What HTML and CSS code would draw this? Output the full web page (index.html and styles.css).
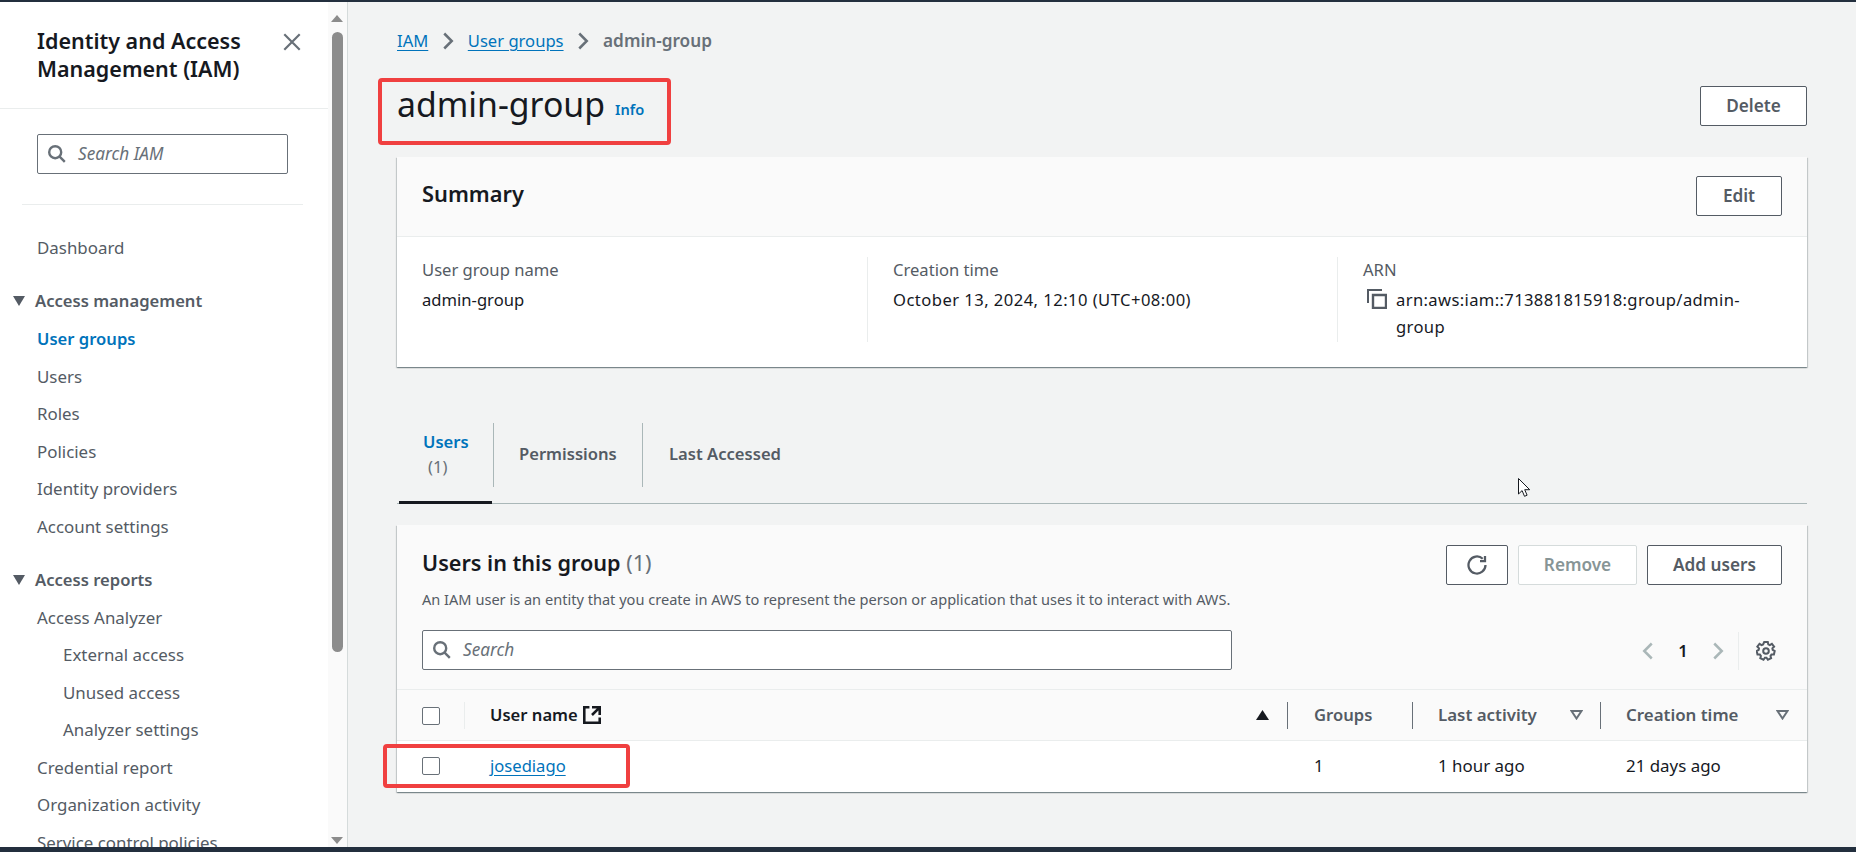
FILE: index.html
```html
<!DOCTYPE html>
<html lang="en">
<head>
<meta charset="utf-8">
<title>admin-group | IAM</title>
<link rel="stylesheet" href="styles.css">
</head>
<body>
<div class="topbar"></div>
<div class="shell">
  <aside class="sidebar">
    <div class="side-head">
      <h2 class="side-title">Identity and Access Management (IAM)</h2>
      <svg class="side-close" viewBox="1 1 14 14"><path d="M2 2l12 12M14 2L2 14"/></svg>
    </div>
    <div class="side-search-wrap">
      <div class="side-search">
        <svg class="search-icon" viewBox="1 1 15 15"><circle cx="7" cy="7" r="5"/><path d="M15 15l-4.500-4.500"/></svg>
        <span class="placeholder">Search IAM</span>
      </div>
    </div>
    <nav class="nav">
      <a class="nav-item">Dashboard</a>
      <div class="nav-section nav-section-first"><span class="caret"></span>Access management</div>
      <a class="nav-item nav-active">User groups</a>
      <a class="nav-item">Users</a>
      <a class="nav-item">Roles</a>
      <a class="nav-item">Policies</a>
      <a class="nav-item">Identity providers</a>
      <a class="nav-item">Account settings</a>
      <div class="nav-section"><span class="caret"></span>Access reports</div>
      <a class="nav-item">Access Analyzer</a>
      <a class="nav-item nav-sub">External access</a>
      <a class="nav-item nav-sub">Unused access</a>
      <a class="nav-item nav-sub">Analyzer settings</a>
      <a class="nav-item">Credential report</a>
      <a class="nav-item">Organization activity</a>
      <a class="nav-item">Service control policies</a>
    </nav>
  </aside>
  <div class="scrollbar">
    <span class="arrow-up"></span>
    <span class="thumb"></span>
    <span class="track-space"></span>
    <span class="arrow-down"></span>
  </div>
  <main class="main">
    <div class="crumbs">
      <a class="link">IAM</a>
      <svg class="crumb-sep" viewBox="0 0 16 16"><path d="M5 2l6 6-6 6"/></svg>
      <a class="link">User groups</a>
      <svg class="crumb-sep" viewBox="0 0 16 16"><path d="M5 2l6 6-6 6"/></svg>
      <span class="crumb-current">admin-group</span>
    </div>
    <div class="page-head">
      <div class="page-title"><h1>admin-group</h1><span class="info">Info</span></div>
      <button class="btn btn-delete">Delete</button>
    </div>

    <section class="card">
      <div class="card-head summary-head">
        <h2 class="summary-title">Summary</h2>
        <button class="btn btn-edit">Edit</button>
      </div>
      <div class="summary-body">
        <div class="col col-1">
          <div class="label">User group name</div>
          <div class="value">admin-group</div>
        </div>
        <div class="col col-2">
          <div class="label">Creation time</div>
          <div class="value value-date">October 13, 2024, 12:10 (UTC+08:00)</div>
        </div>
        <div class="col col-3">
          <div class="label">ARN</div>
          <div class="arn">
            <svg class="copy-icon" viewBox="0 0 20 20"><path class="copy-back" d="M1 14V1h14"/><path d="M6 6h13v13H6z"/></svg>
            <div class="value arn-text">arn:aws:iam::713881815918:group/admin-group</div>
          </div>
        </div>
      </div>
    </section>

    <div class="tabs">
      <div class="tab tab-active"><div class="tab-label"><span class="tab-name">Users</span><span class="tab-count">(1)</span></div></div>
      <div class="tab tab-perm"><div class="tab-label">Permissions</div></div>
      <div class="tab tab-last"><div class="tab-label">Last Accessed</div></div>
    </div>

    <section class="card users-card">
      <div class="card-head users-head">
        <div class="users-top">
          <div>
            <h2 class="users-title">Users in this group <span class="users-count">(1)</span></h2>
            <p class="users-desc">An IAM user is an entity that you create in AWS to represent the person or application that uses it to interact with AWS.</p>
          </div>
          <div class="actions">
            <button class="btn btn-refresh" aria-label="Refresh">
              <svg viewBox="0 0 16 16"><path d="M14.800 8A6.800 6.800 0 1 1 12.600 3"/><path d="M14.400 0.800v4h-4"/></svg>
            </button>
            <button class="btn btn-remove">Remove</button>
            <button class="btn btn-add">Add users</button>
          </div>
        </div>
        <div class="users-tools">
          <div class="table-search">
            <svg class="search-icon" viewBox="1 1 15 15"><circle cx="7" cy="7" r="5"/><path d="M15 15l-4.500-4.500"/></svg>
            <span class="placeholder">Search</span>
          </div>
          <div class="pager">
            <svg class="pager-chev" viewBox="0 0 16 16"><path d="M11 2L5 8l6 6"/></svg>
            <span class="pager-num">1</span>
            <svg class="pager-chev" viewBox="0 0 16 16"><path d="M5 2l6 6-6 6"/></svg>
            <span class="pager-sep"></span>
            <svg class="gear" viewBox="0 0 20 20"><path d="M8.200 1h3.600l.5 2.400 1.500.7 2.100-1.300 2.200 2.800-1.700 1.700.3 1.600 2 1.200-.8 3.400-2.400.1-1 1.300.6 2.300-3.200 1.500-1.400-2h-1.600l-1.400 2-3.200-1.500.6-2.300-1-1.300-2.400-.1-.8-3.400 2-1.200.3-1.600-1.700-1.700 2.200-2.800 2.100 1.300 1.500-.7z"/><circle cx="10" cy="10" r="2.800"/></svg>
          </div>
        </div>
      </div>
      <div class="thead">
        <div class="th c-select"><span class="check"></span></div>
        <div class="th c-name"><span class="th-strong">User name</span>
          <svg class="ext-icon" viewBox="1 1 14 14"><path d="M14 8V2H8M14 2L8 8M6 2H2v12h12v-4"/></svg>
          <span class="grow"></span><svg class="sort-up" viewBox="0 0 13 10"><path d="M6.500 0L13 10H0z"/></svg></div>
        <div class="th c-groups">Groups</div>
        <div class="th c-activity">Last activity<span class="grow"></span><svg class="sort-down" viewBox="0 0 13 10"><path d="M1.500 1h10L6.500 8.500z"/></svg></div>
        <div class="th c-created">Creation time<span class="grow"></span><svg class="sort-down" viewBox="0 0 13 10"><path d="M1.500 1h10L6.500 8.500z"/></svg></div>
      </div>
      <div class="trow">
        <div class="td c-select"><span class="check"></span></div>
        <div class="td c-name"><a class="link">josediago</a></div>
        <div class="td c-groups">1</div>
        <div class="td c-activity">1 hour ago</div>
        <div class="td c-created">21 days ago</div>
      </div>
    </section>
  </main>
</div>
<div class="bottombar"></div>

<div class="mark mark-title"></div>
<div class="mark mark-user"></div>
<svg class="cursor" viewBox="0 0 12 19"><path d="M.5.5v15.500l3.600-3.400 2.400 5.700 2.600-1.100-2.400-5.500h5z"/></svg>
</body>
</html>
```
FILE: styles.css
```css
* { box-sizing: border-box; }
html, body { margin: 0; height: 100%; }
body {
  display: flex;
  flex-direction: column;
  height: 852px;
  overflow: hidden;
  background: #f2f3f3;
  color: #16191f;
  font-family: "Noto Sans", "Open Sans", sans-serif;
  font-size: 16.600px;
  line-height: 22px;
}
h1, h2, p { margin: 0; }
svg { display: block; flex: none; fill: none; stroke: currentColor; }
button { font-family: inherit; }

.topbar { height: 2px; background: #232f3e; flex: none; }
.bottombar { height: 5px; background: #232f3e; flex: none; }
.shell { flex: 1; display: flex; min-height: 0; }

/* Sidebar */
.sidebar { width: 328px; flex: none; background: #fff; overflow: hidden; }
.side-head {
  display: flex;
  justify-content: space-between;
  align-items: flex-start;
  height: 107px;
  padding: 25px 27px 0 37px;
  border-bottom: 1px solid #eaeded;
}
.side-title { width: 235px; font-size: 21.500px; line-height: 28px; font-weight: 600; }
.side-close { width: 18px; height: 18px; margin-top: 6px; color: #687078; stroke-width: 1.700; }
.side-search-wrap { margin: 0 25px 0 22px; padding: 25px 15px 30px; border-bottom: 1px solid #eaeded; }
.side-search {
  display: flex;
  align-items: center;
  gap: 12px;
  width: 251px;
  height: 40px;
  padding-left: 10px;
  border: 1px solid #687078;
  border-radius: 2px;
}
.search-icon { width: 18px; height: 18px; color: #687078; stroke-width: 2; }
.placeholder { font-size: 17.200px; font-style: italic; color: #687078; }
.nav { display: flex; flex-direction: column; padding-top: 24px; font-size: 16.900px; }
.nav-item { height: 37.500px; line-height: 37.500px; padding-left: 37px; color: #545b64; white-space: nowrap; }
.nav-sub { padding-left: 63px; }
.nav-active { color: #0073bb; font-size: 16.600px; font-weight: 600; }
.nav-section {
  display: flex;
  align-items: center;
  gap: 10px;
  height: 37.500px;
  margin-top: 16px;
  padding-left: 13px;
  color: #545b64;
  font-size: 16.600px;
  font-weight: 600;
}
.caret { width: 0; height: 0; border-left: 6.500px solid transparent; border-right: 6.500px solid transparent; border-top: 10px solid #545b64; }

/* Fake scrollbar */
.scrollbar {
  width: 20px;
  flex: none;
  display: flex;
  flex-direction: column;
  align-items: center;
  padding: 13px 4px 3px 3px;
  background: #fafafa;
  border-right: 1px solid #d5dbdb;
}
.arrow-up { width: 0; height: 0; border-left: 6.500px solid transparent; border-right: 6.500px solid transparent; border-bottom: 7px solid #8c8c8c; }
.thumb { width: 11px; height: 620px; margin-top: 10px; border-radius: 6px; background: #8c8c8c; flex: none; }
.track-space { flex: 1; }
.arrow-down { width: 0; height: 0; border-left: 6.500px solid transparent; border-right: 6.500px solid transparent; border-top: 7px solid #8c8c8c; }

/* Main */
.main { flex: 1; min-width: 0; padding: 28px 49px 0 49px; }
.link { color: #0073bb; text-decoration: underline; text-underline-offset: 3px; }
.crumbs { display: flex; align-items: center; height: 22px; }
.crumb-sep { width: 20px; height: 20px; margin: 0 10px 0 9.500px; color: #687078; stroke-width: 2; }
.crumb-current { font-size: 17.200px; color: #687078; font-weight: 600; }
.page-head { display: flex; justify-content: space-between; align-items: center; margin-top: 33px; height: 42px; }
.page-title { display: flex; align-items: flex-start; gap: 10px; margin-top: -4px; }
.page-title h1 { font-size: 33.800px; line-height: 42px; font-weight: 400; }
.info { font-size: 14.600px; font-weight: 600; color: #0073bb; margin-top: 15px; }

.btn {
  height: 40px;
  padding: 0 0 2px;
  border: 1px solid #545b64;
  border-radius: 2px;
  background: #fff;
  color: #545b64;
  font-size: 17.200px;
  font-weight: 600;
}
.btn-delete { width: 107px; }

.card {
  margin-top: 30px;
  background: #fff;
  box-shadow: 0 1px 1px 0 rgba(0, 28, 36, .3), 1px 1px 1px 0 rgba(0, 28, 36, .15), -1px 1px 1px 0 rgba(0, 28, 36, .15);
}
.card-head { background: #fafafa; border-bottom: 1px solid #eaeded; }
.summary-head {
  display: flex;
  justify-content: space-between;
  align-items: center;
  height: 80px;
  padding: 0 25px 1px 25px;
}
.summary-title { font-size: 21.800px; line-height: 28px; font-weight: 600; margin-top: -4px; }
.btn-edit { width: 86px; }
.summary-body { display: flex; height: 130px; padding: 20px 0 0 25px; }
.col { height: 85px; }
.col-1 { width: 446px; border-right: 1px solid #eaeded; }
.col-2 { width: 470px; padding-left: 25px; border-right: 1px solid #eaeded; }
.col-3 { flex: 1; padding-left: 25px; }
.label { color: #545b64; height: 22px; margin: 2px 0 8px; }
.value-date { letter-spacing: .45px; }
.arn { display: flex; gap: 9px; padding-left: 4px; }
.arn-text { width: 368px; line-height: 27px; margin-top: -3px; letter-spacing: .36px; overflow-wrap: anywhere; }
.copy-icon { width: 20px; height: 20px; color: #545b64; stroke-width: 2.400; }
.copy-back { stroke-width: 2; }

.tabs { display: flex; margin-top: 56px; padding-left: 2px; border-bottom: 1px solid #aab7b8; height: 81px; }
.tab { height: 81px; padding-bottom: 14px; color: #545b64; font-weight: 600; border-bottom: 3px solid transparent; }
.tab-label { height: 64px; display: flex; align-items: center; border-right: 1px solid #aab7b8; padding: 0 25px 2px; }
.tab-active { width: 93px; margin-right: 2px; border-bottom-color: #16191f; }
.tab-active .tab-label { width: 95px; flex-direction: column; align-items: flex-start; justify-content: center; padding: 0 0 2px 24px; gap: 3px; }
.tab-name { color: #0073bb; }
.tab-count { color: #687078; font-weight: 400; padding-left: 5px; }
.tab-perm .tab-label { width: 149px; }
.tab-last .tab-label { border-right: 0; padding-left: 26px; }

.users-card { margin-top: 21px; }
.users-head { height: 165px; padding: 20px 25px 0 25px; }
.users-top { display: flex; justify-content: space-between; height: 85px; }
.users-title { margin-top: 4px; font-size: 21.600px; line-height: 28px; font-weight: 600; }
.users-count { color: #687078; font-weight: 400; }
.users-desc { margin-top: 12px; font-size: 14.580px; line-height: 20px; color: #545b64; white-space: nowrap; }
.actions { display: flex; gap: 10px; }
.btn-refresh { width: 62px; display: flex; align-items: center; justify-content: center; padding: 0; }
.btn-refresh svg { width: 20px; height: 20px; stroke-width: 1.800; }
.btn-remove { width: 119px; border-color: #d5dbdb; color: #879596; }
.btn-add { width: 135px; }
.users-tools { display: flex; justify-content: space-between; align-items: center; height: 40px; }
.table-search {
  display: flex;
  align-items: center;
  gap: 12px;
  width: 810px;
  height: 40px;
  padding-left: 10px;
  background: #fff;
  border: 1px solid #687078;
  border-radius: 2px;
}
.pager { display: flex; align-items: center; margin-top: 1px; }
.pager-chev { width: 20px; height: 20px; color: #aab7b8; stroke-width: 2; }
.pager-num { width: 50px; text-align: center; font-weight: 600; }
.pager-sep { width: 1px; height: 38px; margin: 0 17px 0 10px; background: #eaeded; }
.gear { width: 20px; height: 20px; margin-right: 6px; color: #545b64; stroke-width: 2; }

.thead { display: flex; align-items: center; height: 51px; background: #fafafa; border-bottom: 1px solid #eaeded; }
.trow { display: flex; align-items: center; height: 51px; padding-bottom: 2px; }
.th, .td { display: flex; align-items: center; height: 27px; padding-left: 26px; white-space: nowrap; }
.th { color: #545b64; font-weight: 600; border-right: 1px solid #687078; }
.c-select { width: 68px; padding-left: 25px; }
.c-name { width: 823px; padding-left: 25px; }
.c-groups { width: 125px; }
.c-activity { width: 188px; padding-left: 25px; font-size: 16.900px; }
.c-created { flex: 1; border-right: 0; padding: 0 16px 0 25px; font-size: 16.900px; }
.th.c-select { border-right-color: #eaeded; }
.th-strong { color: #16191f; }
.grow { flex: 1; }
.check { width: 18px; height: 18px; margin-top: 1px; background: #fff; border: 1px solid #687078; border-radius: 2px; }
.ext-icon { width: 18px; height: 18px; margin-left: 5px; color: #16191f; stroke-width: 2; }
.sort-up { width: 13px; height: 10px; margin-right: 18px; fill: #16191f; stroke: none; }
.sort-down { width: 13px; height: 10px; margin-right: 2px; color: #687078; stroke-width: 2; }
.c-activity .sort-down { margin-right: 17px; }

/* Annotations and pointer laid over the screenshot */
.mark { position: absolute; border: 4px solid #f04040; border-radius: 4px; }
.mark-title { left: 378px; top: 78px; width: 293px; height: 67px; }
.mark-user { left: 383px; top: 744px; width: 247px; height: 44px; }
.cursor { position: absolute; left: 1518px; top: 478px; width: 12px; height: 19px; fill: #fff; stroke: #16191f; stroke-width: 1; }
```
